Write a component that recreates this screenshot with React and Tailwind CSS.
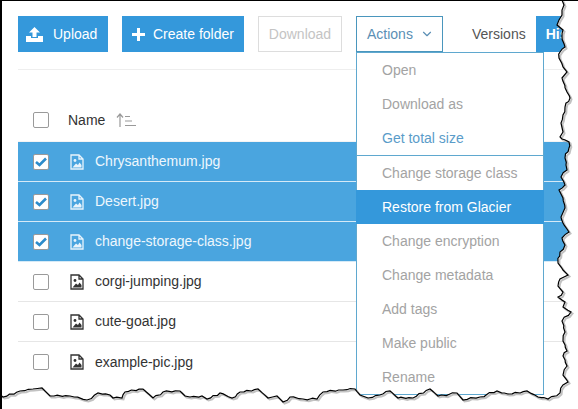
import React from "react";
import { ChevronDown } from "lucide-react";

const files = [
  { name: "Chrysanthemum.jpg", selected: true },
  { name: "Desert.jpg", selected: true },
  { name: "change-storage-class.jpg", selected: true },
  { name: "corgi-jumping.jpg", selected: false },
  { name: "cute-goat.jpg", selected: false },
  { name: "example-pic.jpg", selected: false },
];

const menuItems = [
  { label: "Open" },
  { label: "Download as" },
  { label: "Get total size", link: true, divider: true },
  { label: "Change storage class" },
  { label: "Restore from Glacier", active: true },
  { label: "Change encryption" },
  { label: "Change metadata" },
  { label: "Add tags" },
  { label: "Make public" },
  { label: "Rename" },
];

// torn paper edge, traced from the picture
const edgePoints = [
  [562, 0], [564, 5], [562, 10], [562, 15], [559, 20], [557, 25], [563, 30], [562, 37], [565, 47], [560, 52],
  [559, 58], [563, 67], [567, 72], [562, 78], [567, 92], [570, 98], [565, 107], [563, 115], [561, 123], [563, 132],
  [560, 137], [562, 139], [569, 142], [569, 148], [565, 158], [566, 165], [567, 170], [561, 177], [565, 185], [559, 190],
  [563, 198], [565, 208], [561, 217], [563, 223], [569, 232], [562, 238], [565, 245], [560, 252], [558, 263], [563, 270],
  [568, 275], [560, 279], [558, 286], [563, 292], [558, 297], [565, 302], [563, 307], [571, 312], [562, 321], [565, 332],
  [563, 341], [567, 351], [563, 356], [567, 366], [563, 375], [568, 382], [563, 385], [560, 393], [548, 399], [538, 397],
  [527, 391], [508, 394], [497, 391], [480, 397], [463, 400], [457, 393], [438, 396], [430, 389], [413, 398], [398, 398],
  [390, 391], [380, 395], [368, 398], [360, 395], [355, 389], [343, 390], [323, 392], [317, 399], [303, 399], [290, 397],
  [283, 402], [277, 396], [268, 398], [258, 389], [240, 392], [232, 398], [220, 393], [207, 399], [202, 396], [190, 397],
  [185, 396], [180, 391], [163, 392], [153, 398], [143, 389], [125, 392], [122, 398], [113, 398], [110, 395], [98, 393],
  [87, 400], [70, 396], [50, 396], [42, 388], [33, 389], [20, 391], [3, 397], [0, 395],
];

// long straight pieces get a small fixed wobble so the line looks torn
const roughen = (points) => {
  let path = `M${points[0][0]} ${points[0][1]}`;
  let n = 0;
  for (let i = 1; i < points.length; i++) {
    const [x0, y0] = points[i - 1];
    const [x1, y1] = points[i];
    const steps = Math.max(1, Math.round(Math.hypot(x1 - x0, y1 - y0) / 4));
    for (let s = 1; s <= steps; s++) {
      n += 1;
      const wobble = s === steps ? 0 : ((n * 7) % 5) * 0.4 - 0.8;
      path += ` L${(x0 + ((x1 - x0) * s) / steps + wobble).toFixed(1)} ${(y0 + ((y1 - y0) * s) / steps + wobble).toFixed(1)}`;
    }
  }
  return path;
};

const edge = roughen(edgePoints);

const UploadIcon = () => (
  <svg width="17" height="15" viewBox="0 0 17 15" fill="white" className="shrink-0">
    <path d="M8.5 0 L14 5.5 H10.5 V10 H6.5 V5.5 H3 Z" />
    <path d="M0 9 H5 V11 H12 V9 H17 V15 H0 Z" />
  </svg>
);

const PlusIcon = () => (
  <svg width="13" height="13" viewBox="0 0 13 13" fill="white" className="shrink-0">
    <path d="M5 0 H8 V5 H13 V8 H8 V13 H5 V8 H0 V5 H5 Z" />
  </svg>
);

const SortIcon = () => (
  <svg width="20" height="14" viewBox="0 0 20 14" fill="none" stroke="#999999" strokeWidth="1.2">
    <path d="M4 14 V1 M1 4.5 L4 1 L7 4.5" />
    <path d="M9 3.5 H14 M9 8 H16 M9 12.5 H20" />
  </svg>
);

const ImageFileIcon = ({ light }) => {
  const color = light ? "#e8f4fc" : "#333333";
  return (
    <svg width="14" height="16" viewBox="0 0 14 16" fill="none" className="shrink-0">
      <path d="M1 1 H9 L13 5 V15 H1 Z M9 1 V5 H13" stroke={color} strokeWidth="1.3" />
      <circle cx="5" cy="6.5" r="1.4" fill={color} />
      <path d="M2.5 13.5 L6 9.5 L8 11 L9.5 8.5 L11.5 11 V13.5 Z" fill={color} />
    </svg>
  );
};

const Checkbox = ({ checked }) => (
  <div className="w-4 h-4 shrink-0 flex items-center justify-center bg-white border border-[#9a9a9a] rounded-[2px]">
    {checked && (
      <svg width="12" height="10" viewBox="0 0 12 10" fill="none" stroke="#2d8ccb" strokeWidth="2.6">
        <path d="M1 5 L4.5 8 L11 1.5" />
      </svg>
    )}
  </div>
);

const FileRow = ({ file }) => (
  <div
    className={`h-10 shrink-0 flex items-center pl-[15px] border-b last:border-b-0 ${
      file.selected ? "bg-[#4aa5df] border-[#d5eaf7] text-[#eef7fd]" : "bg-white border-[#e6e6e6] text-[#333333]"
    }`}
  >
    <Checkbox checked={file.selected} />
    <div className="ml-[21px] mr-[11px]">
      <ImageFileIcon light={file.selected} />
    </div>
    <span className="text-[14px]">{file.name}</span>
  </div>
);

const ActionsMenu = () => (
  <div className="absolute left-0 top-[36px] w-[188px] bg-white border border-[#5fa8cf] z-10">
    {menuItems.map((item) => (
      <div
        key={item.label}
        className={`flex items-center pl-[26px] -mx-px text-[14px] ${
          item.active ? "bg-[#3498db] text-white" : item.link ? "text-[#5a9cc9]" : "text-[#a3a3a3]"
        } ${item.divider ? "h-[35px] border-b border-[#5fa8cf]" : "h-[34px]"}`}
      >
        {item.label}
      </div>
    ))}
  </div>
);

const App = () => {
  return (
    <div
      className="relative w-[578px] h-[409px] overflow-hidden bg-white border-t border-l-2 border-black"
      style={{ fontFamily: '"Liberation Sans", Arial, sans-serif' }}
    >
      <div className="flex pl-4 pt-[15px] h-[68px] text-[14px]">
        <button className="w-[90px] h-9 shrink-0 flex items-center pl-2 gap-[10px] bg-[#3498db] text-white">
          <UploadIcon />
          Upload
        </button>
        <button className="w-[122px] h-9 shrink-0 ml-[14px] flex items-center pl-[10px] gap-2 bg-[#3498db] text-white">
          <PlusIcon />
          Create folder
        </button>
        <button className="w-[84px] h-9 shrink-0 ml-[14px] border border-[#dddddd] text-[#c4c4c4]">Download</button>
        <div className="relative w-[87px] h-9 shrink-0 ml-[14px]">
          <button className="w-full h-full flex items-center pl-[10px] gap-[7px] border border-[#4a96bd] text-[#5b8fb5]">
            Actions
            <ChevronDown size={14} strokeWidth={2} />
          </button>
          <ActionsMenu />
        </div>
        <button className="h-9 shrink-0 ml-[15px] pl-[14px] pr-[10px] text-[#555555]">Versions</button>
        <button className="h-9 shrink-0 pl-[10px] pr-[11px] bg-[#3498db] text-white font-bold">History</button>
      </div>

      <div className="ml-4 border-t border-[#eeeeee]">
        <div className="h-[72px] flex items-center pt-[29px] pl-[15px] border-b border-[#f4f4f4]">
          <Checkbox />
          <span className="ml-[19px] text-[14px] text-[#333333]">Name</span>
          <div className="ml-[11px]">
            <SortIcon />
          </div>
        </div>
        {files.map((file) => (
          <FileRow key={file.name} file={file} />
        ))}
      </div>

      {/* torn edge of the screenshot */}
      <svg width="578" height="409" viewBox="0 0 578 409" className="absolute -left-[2px] -top-px z-20 pointer-events-none">
        <path d={`${edge} L0 409 L578 409 L578 0 Z`} fill="white" />
        <path d={edge} fill="none" stroke="#9a9a9a" strokeWidth="2" transform="translate(1.5 1.5)" opacity="0.6" />
        <path d={edge} fill="none" stroke="black" strokeWidth="1.2" />
        <path d="M0.5 0 V395" stroke="black" strokeWidth="1.5" />
      </svg>
    </div>
  );
};

export default App;
